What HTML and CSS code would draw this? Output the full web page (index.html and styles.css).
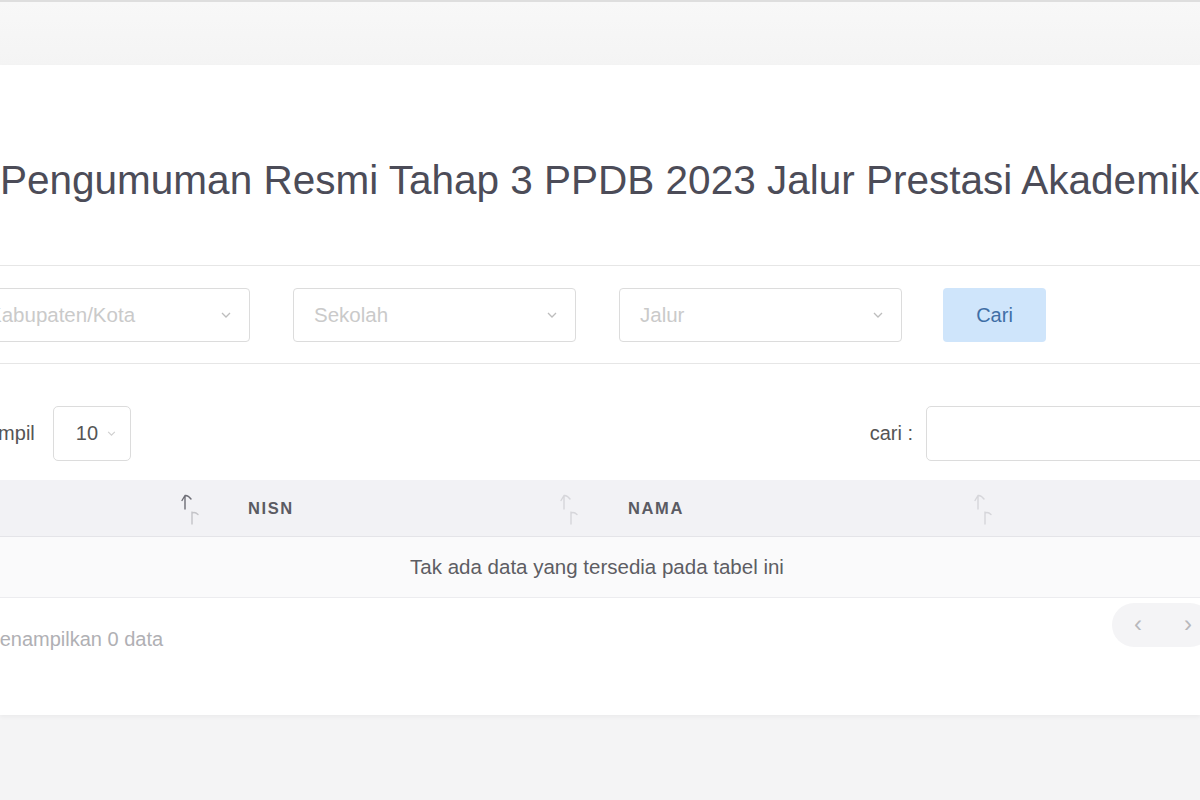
FILE: index.html
```html
<!DOCTYPE html>
<html lang="id">
<head>
<meta charset="utf-8">
<title>Pengumuman PPDB 2023</title>
<link rel="stylesheet" href="styles.css">
</head>
<body>
<div class="topbar"></div>
<main class="card">
  <h1 class="title">Pengumuman Resmi Tahap 3 PPDB 2023 Jalur Prestasi Akademik</h1>
  <hr class="divider">
  <div class="filters">
    <div class="select first"><span class="ph">Kabupaten/Kota</span><svg class="chev" width="10" height="6" viewBox="0 0 10 6"><path d="M1 1l4 4 4-4" fill="none" stroke="#bdbdbd" stroke-width="1.3"/></svg></div>
    <div class="select"><span class="ph">Sekolah</span><svg class="chev" width="10" height="6" viewBox="0 0 10 6"><path d="M1 1l4 4 4-4" fill="none" stroke="#bdbdbd" stroke-width="1.3"/></svg></div>
    <div class="select"><span class="ph">Jalur</span><svg class="chev" width="10" height="6" viewBox="0 0 10 6"><path d="M1 1l4 4 4-4" fill="none" stroke="#bdbdbd" stroke-width="1.3"/></svg></div>
    <button class="btn-cari">Cari</button>
  </div>
  <hr class="divider">
  <div class="controls">
    <div class="length">
      <span class="lbl">Tampil</span>
      <div class="len-select"><span>10</span><svg class="chev" width="9" height="5" viewBox="0 0 10 6"><path d="M1 1l4 4 4-4" fill="none" stroke="#cfcfcf" stroke-width="1.3"/></svg></div>
    </div>
    <div class="search">
      <span class="lbl">cari :</span>
      <div class="search-input"></div>
    </div>
  </div>
  <div class="table">
    <div class="thead">
      <div class="th c1">
        <svg class="sort active" width="20" height="34" viewBox="0 0 20 34"><path class="u" d="M4 16V3M1 7.5L4 2.5Q7 2 10 6"/><path class="d" d="M11 31V19M11 20Q14 18.5 17 21.5"/></svg>
      </div>
      <div class="th c2"><span class="hd">NISN</span>
        <svg class="sort" width="20" height="34" viewBox="0 0 20 34"><path class="u" d="M4 16V3M1 7.5L4 2.5Q7 2 10 6"/><path class="d" d="M11 31V19M11 20Q14 18.5 17 21.5"/></svg>
      </div>
      <div class="th c3"><span class="hd">NAMA</span>
        <svg class="sort" width="20" height="34" viewBox="0 0 20 34"><path class="u" d="M4 16V3M1 7.5L4 2.5Q7 2 10 6"/><path class="d" d="M11 31V19M11 20Q14 18.5 17 21.5"/></svg>
      </div>
      <div class="th c4"></div>
    </div>
    <div class="empty-row">Tak ada data yang tersedia pada tabel ini</div>
  </div>
  <div class="tfoot">
    <span class="info">Menampilkan 0 data</span>
    <div class="pager"><span class="pg">&#8249;</span><span class="pg">&#8250;</span></div>
  </div>
</main>
</body>
</html>
```
FILE: styles.css
```css
* { box-sizing: border-box; }
html, body { margin: 0; padding: 0; }
body {
  background: #f4f4f5;
  font-family: "Liberation Sans", Arial, sans-serif;
  color: #555;
  width: 1200px;
  height: 800px;
  overflow: hidden;
}
.topbar {
  height: 65px;
  border-top: 2px solid #dedede;
  background: linear-gradient(#f8f8f8, #f4f4f4);
}
.card {
  background: #fff;
  height: 650px;
  padding-top: 91px;
  box-shadow: 0 2px 4px rgba(0,0,0,0.04);
}
.title {
  margin: 0;
  font-weight: normal;
  font-size: 40.5px;
  line-height: 48px;
  color: #4c4c58;
  white-space: nowrap;
}
.divider {
  margin: 0;
  border: 0;
  border-top: 1px solid #e6e6e6;
}
.title + .divider { margin-top: 61px; }
.filters {
  display: flex;
  align-items: center;
  gap: 43px;
  margin-left: -33px;
  padding: 22px 0 21px;
}
.select {
  width: 283px;
  height: 54px;
  border: 1px solid #dcdcdc;
  border-radius: 4px;
  display: flex;
  align-items: center;
  justify-content: space-between;
  padding: 0 18px 0 20px;
  font-size: 20.5px;
}
.select.first { padding-left: 20px; }
.ph { color: #cacaca; }
.btn-cari {
  margin-left: -2px;
  width: 103px;
  height: 54px;
  border: 0;
  border-radius: 4px;
  background: #cfe5fb;
  color: #3f6fa6;
  font-family: inherit;
  font-size: 20px;
  padding: 0;
}
.controls {
  display: flex;
  justify-content: space-between;
  align-items: center;
  margin-top: 42px;
  margin-left: -23px;
  margin-right: -20px;
}
.length, .search {
  display: flex;
  align-items: center;
}
.lbl { font-size: 20px; color: #555; }
.len-select {
  margin-left: 18px;
  width: 78px;
  height: 55px;
  border: 1px solid #dcdcdc;
  border-radius: 5px;
  display: flex;
  align-items: center;
  padding-left: 22px;
  gap: 9px;
  font-size: 20px;
  color: #555;
}
.search-input {
  margin-left: 13px;
  width: 294px;
  height: 55px;
  border: 1px solid #dcdcdc;
  border-radius: 5px;
}
.table { margin-top: 19px; margin-left: -20px; }
.thead {
  display: grid;
  grid-template-columns: 248px 380px 414px 1fr;
  height: 57px;
  background: #f2f2f5;
  border-bottom: 1px solid #e4e4e8;
}
.th {
  display: flex;
  align-items: center;
  justify-content: space-between;
  padding: 0 28px 0 20px;
}
.th.c1 { justify-content: flex-end; padding-right: 27px; }
.hd {
  font-weight: bold;
  font-size: 16.5px;
  letter-spacing: 1.6px;
  color: #5b5b63;
}
.sort {
  margin-top: 4px;
  fill: none;
  stroke-width: 1.4;
  stroke-linecap: round;
  stroke-linejoin: round;
}
.sort .u, .sort .d { stroke: #d6d6da; }
.sort.active .u { stroke: #6e6e76; }
.sort.active .d { stroke: #c4c4c8; }
.empty-row {
  height: 61px;
  display: flex;
  align-items: center;
  justify-content: center;
  background: #fafafb;
  border-bottom: 1px solid #ececef;
  font-size: 20.5px;
  color: #5d5d63;
  width: 1234px;
}
.tfoot {
  display: flex;
  justify-content: space-between;
  align-items: flex-start;
  margin-left: -17px;
  margin-top: 5px;
}
.info { font-size: 20px; color: #b0b0b4; margin-top: 25px; }
.pager {
  display: flex;
  align-items: center;
  gap: 42px;
  background: #f4f4f6;
  border-radius: 22px;
  height: 44px;
  padding: 0 0 0 22px;
  width: 100px;
  margin-right: -12px;
}
.pg { font-size: 24px; color: #b8b8bc; line-height: 1; margin-top: -3px; }
```
